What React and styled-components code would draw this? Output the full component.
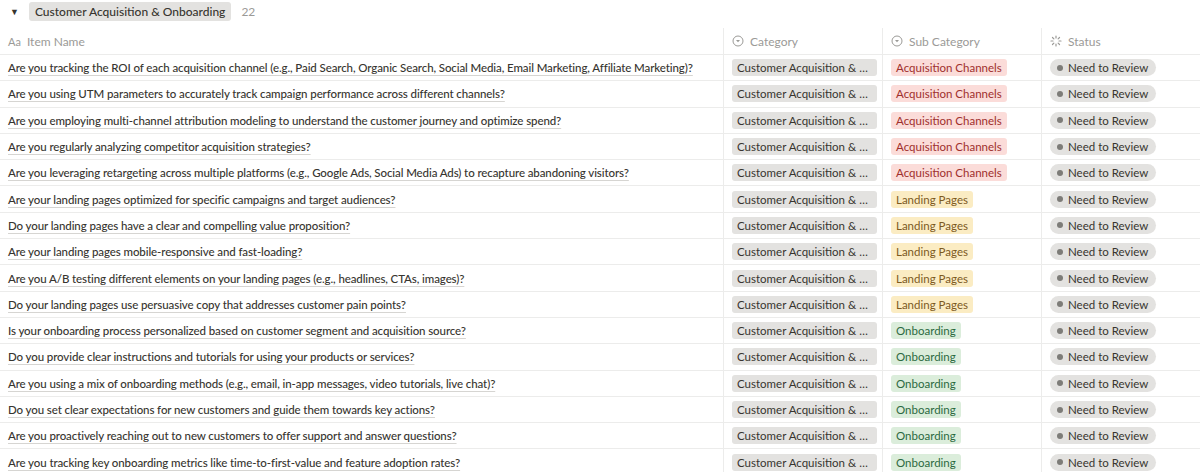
import React from 'react';
import styled, { createGlobalStyle } from 'styled-components';

const Global = createGlobalStyle`
  body { margin: 0; background: #fff; font-family: Lato, "Noto Sans", sans-serif; color: #37352f; }
`;

const rows = [
  ['Are you tracking the ROI of each acquisition channel (e.g., Paid Search, Organic Search, Social Media, Email Marketing, Affiliate Marketing)?', 'a'],
  ['Are you using UTM parameters to accurately track campaign performance across different channels?', 'a'],
  ['Are you employing multi-channel attribution modeling to understand the customer journey and optimize spend?', 'a'],
  ['Are you regularly analyzing competitor acquisition strategies?', 'a'],
  ['Are you leveraging retargeting across multiple platforms (e.g., Google Ads, Social Media Ads) to recapture abandoning visitors?', 'a'],
  ['Are your landing pages optimized for specific campaigns and target audiences?', 'l'],
  ['Do your landing pages have a clear and compelling value proposition?', 'l'],
  ['Are your landing pages mobile-responsive and fast-loading?', 'l'],
  ['Are you A/B testing different elements on your landing pages (e.g., headlines, CTAs, images)?', 'l'],
  ['Do your landing pages use persuasive copy that addresses customer pain points?', 'l'],
  ['Is your onboarding process personalized based on customer segment and acquisition source?', 'o'],
  ['Do you provide clear instructions and tutorials for using your products or services?', 'o'],
  ['Are you using a mix of onboarding methods (e.g., email, in-app messages, video tutorials, live chat)?', 'o'],
  ['Do you set clear expectations for new customers and guide them towards key actions?', 'o'],
  ['Are you proactively reaching out to new customers to offer support and answer questions?', 'o'],
  ['Are you tracking key onboarding metrics like time-to-first-value and feature adoption rates?', 'o'],
];

const subs = {
  a: { label: 'Acquisition Channels', bg: '#fbdcd9', fg: '#9f2f2d' },
  l: { label: 'Landing Pages', bg: '#fbecc3', fg: '#7d5a1e' },
  o: { label: 'Onboarding', bg: '#dbeddb', fg: '#2b6a3f' },
};

const GroupBar = styled.div`
  display: flex; align-items: center; gap: 8px;
  height: 22px; padding: 0 0 0 10px; margin-bottom: 6px;
  font-size: 12px;
`;
const Tri = styled.span` font-size: 9px; color: #37352f; margin-right: 2px; `;
const GroupTag = styled.span`
  background: #e3e2e0; border-radius: 3px; padding: 2px 6px; font-weight: 500;
`;
const Count = styled.span` color: #9b9a97; margin-left: 2px; `;

const Grid = styled.div`
  display: grid;
  grid-template-columns: 723px 159px 159px 159px;
`;
const Head = styled.div`
  height: 26px; display: flex; align-items: center; gap: 6px;
  padding: 0 8px; font-size: 12px; color: #9b9a97;
  border-bottom: 1px solid #ececeb;
  border-left: ${p => (p.$first ? 'none' : '1px solid #ececeb')};
`;
const Cell = styled.div`
  height: 26.3px; box-sizing: border-box; display: flex; align-items: center;
  padding: 0 5px 0 8px; font-size: 11.5px; overflow: hidden; white-space: nowrap;
  border-bottom: 1px solid #ececeb;
  border-left: ${p => (p.$first ? 'none' : '1px solid #ececeb')};
`;
const Title = styled.span`
  font-weight: 500; letter-spacing: -0.1px; text-decoration: underline; text-decoration-color: #d6d5d2;
  text-underline-offset: 3px;
`;
const Pill = styled.span`
  background: ${p => p.$bg}; color: ${p => p.$fg};
  border-radius: 3px; padding: 2px 5px; font-size: 11.5px;
  overflow: hidden; text-overflow: ellipsis; white-space: nowrap; max-width: 136px;
`;
const Status = styled.span`
  display: inline-flex; align-items: center; gap: 5px;
  background: #e3e2e0; color: #37352f; border-radius: 10px; padding: 2px 8px 2px 7px; font-size: 11.5px;
`;
const Dot = styled.span` width: 6px; height: 6px; border-radius: 50%; background: #7d7c78; `;

const SelectIcon = () => (
  <svg width="12" height="12" viewBox="0 0 12 12" fill="none" stroke="#9b9a97">
    <circle cx="6" cy="6" r="5" />
    <path d="M4 5l2 2.2L8 5" fill="#9b9a97" stroke="none" />
  </svg>
);
const StatusIcon = () => (
  <svg width="12" height="12" viewBox="0 0 12 12" stroke="#9b9a97" strokeWidth="1.2" strokeLinecap="round">
    {[0, 45, 90, 135, 180, 225, 270, 315].map(a => (
      <line key={a} x1="6" y1="1" x2="6" y2="3" transform={`rotate(${a} 6 6)`} />
    ))}
  </svg>
);

export default function App() {
  return (
    <>
      <Global />
      <GroupBar>
        <Tri>▼</Tri>
        <GroupTag>Customer Acquisition &amp; Onboarding</GroupTag>
        <Count>22</Count>
      </GroupBar>
      <Grid>
        <Head $first><span style={{ fontSize: 11 }}>Aa</span> Item Name</Head>
        <Head><SelectIcon /> Category</Head>
        <Head><SelectIcon /> Sub Category</Head>
        <Head><StatusIcon /> Status</Head>
        {rows.map(([t, k], i) => (
          <React.Fragment key={i}>
            <Cell $first><Title>{t}</Title></Cell>
            <Cell><Pill $bg="#e3e2e0" $fg="#37352f">Customer Acquisition &amp; Onboarding</Pill></Cell>
            <Cell><Pill $bg={subs[k].bg} $fg={subs[k].fg}>{subs[k].label}</Pill></Cell>
            <Cell><Status><Dot />Need to Review</Status></Cell>
          </React.Fragment>
        ))}
      </Grid>
    </>
  );
}
